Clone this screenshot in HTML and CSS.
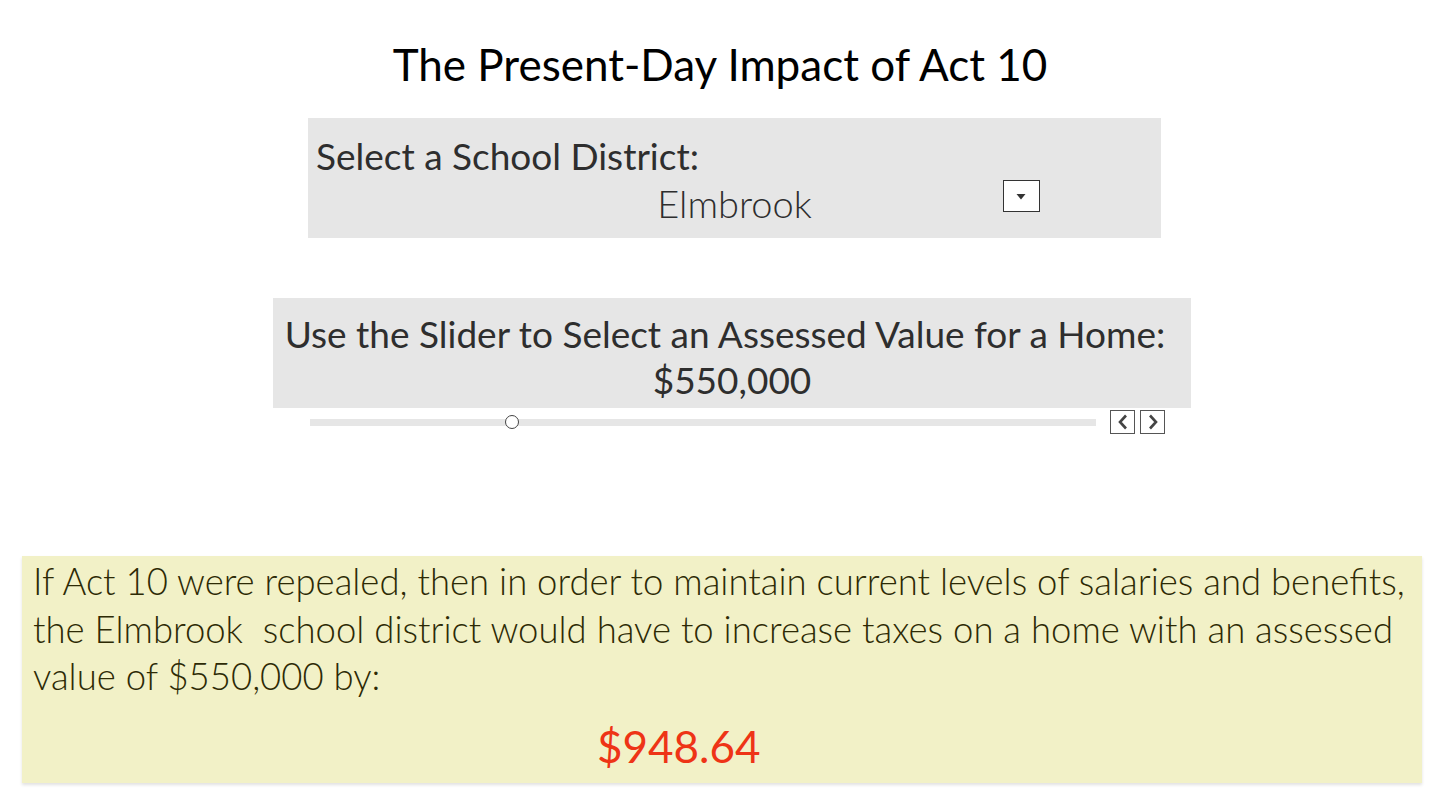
FILE: index.html
```html
<!DOCTYPE html>
<html>
<head>
<meta charset="utf-8">
<link rel="stylesheet" href="styles.css">
</head>
<body>
<div class="page">
  <h1 class="title">The Present-Day Impact of Act 10</h1>
  <div class="param district">
    <div class="label">Select a School District:</div>
    <div class="select-row">
      <span class="spacer"></span>
      <span class="select-value">Elmbrook</span>
      <span class="dd-cell"><span class="dd-btn"><svg width="12" height="9" viewBox="0 0 12 9"><path d="M1.5 2h9L6 7.5z" fill="#333"/></svg></span></span>
    </div>
  </div>
  <div class="param slider-param">
    <div class="label">Use the Slider to Select an Assessed Value for a Home:</div>
    <div class="slider-value">$550,000</div>
  </div>
  <div class="slider-row">
    <div class="track"><span class="thumb"></span></div>
    <div class="steps">
      <span class="step"><svg width="14" height="18" viewBox="0 0 14 18"><path d="M10 2.5L4 9l6 6.5" fill="none" stroke="#444" stroke-width="2.6"/></svg></span>
      <span class="step"><svg width="14" height="18" viewBox="0 0 14 18"><path d="M4 2.5l6 6.5-6 6.5" fill="none" stroke="#444" stroke-width="2.6"/></svg></span>
    </div>
  </div>
  <div class="result">
    <p class="result-text">If Act 10 were repealed, then in order to maintain current levels of salaries and benefits, the Elmbrook&nbsp; school district would have to increase taxes on a home with an assessed value of $550,000 by:</p>
    <div class="amount">$948.64</div>
  </div>
</div>
</body>
</html>
```

FILE: styles.css
```css
html, body {
  margin: 0;
  padding: 0;
  background: #ffffff;
}
body {
  font-family: "Lato", "Open Sans", sans-serif;
  color: #333;
}
.page {
  display: flex;
  flex-direction: column;
  width: 1456px;
  height: 793px;
  overflow: hidden;
}
.title {
  margin: 36px 0 0 0;
  height: 56px;
  line-height: 56px;
  font-size: 44px;
  font-weight: 400;
  color: #000;
  text-align: center;
  padding-right: 16px;
}
.param {
  background: #e6e6e6;
  box-sizing: border-box;
}
.district {
  margin: 26px 0 0 308px;
  width: 853px;
  height: 120px;
  padding: 16px 8px 0 8px;
}
.label {
  font-size: 37px;
  line-height: 44px;
  color: #2e2e2e;
}
.select-row {
  display: grid;
  grid-template-columns: 1fr auto 1fr;
  align-items: center;
  height: 50px;
}
.select-value {
  font-size: 38px;
  font-weight: 300;
  color: #2e2e2e;
  line-height: 50px;
}
.dd-cell {
  display: flex;
  padding-left: 191px;
  margin-top: -14px;
}
.dd-btn {
  width: 35px;
  height: 30px;
  border: 1px solid #333;
  background: #fff;
  display: flex;
  align-items: center;
  justify-content: center;
}
.slider-param {
  margin: 60px 0 0 273px;
  width: 918px;
  height: 110px;
  padding-top: 14px;
  text-align: center;
}
.slider-param .label {
  padding-right: 14px;
}
.slider-value {
  font-size: 37px;
  line-height: 48px;
  color: #2e2e2e;
}
.slider-row {
  display: flex;
  align-items: center;
  gap: 14px;
  margin: 1px 0 0 310px;
  height: 26px;
}
.track {
  position: relative;
  width: 786px;
  height: 7px;
  background: #e6e6e6;
}
.thumb {
  position: absolute;
  left: 195px;
  top: -4px;
  width: 12px;
  height: 12px;
  border: 1.5px solid #444;
  border-radius: 50%;
  background: #fff;
}
.steps {
  display: flex;
  gap: 5px;
}
.step {
  width: 23px;
  height: 22px;
  border: 1.5px solid #555;
  display: flex;
  align-items: center;
  justify-content: center;
  background: #fff;
}
.result {
  margin: 121px 0 0 22px;
  width: 1400px;
  height: 227px;
  box-sizing: border-box;
  background: #f2f1c7;
  box-shadow: 0 2px 3px rgba(0,0,0,0.12);
  padding: 2px 0 0 11px;
}
.result-text {
  margin: 0;
  font-size: 36.5px;
  font-weight: 300;
  line-height: 47.5px;
  color: #2d2a05;
}
.amount {
  margin-top: 20px;
  padding-left: 564px;
  font-size: 44px;
  line-height: 50px;
  color: #ee3416;
}
```
